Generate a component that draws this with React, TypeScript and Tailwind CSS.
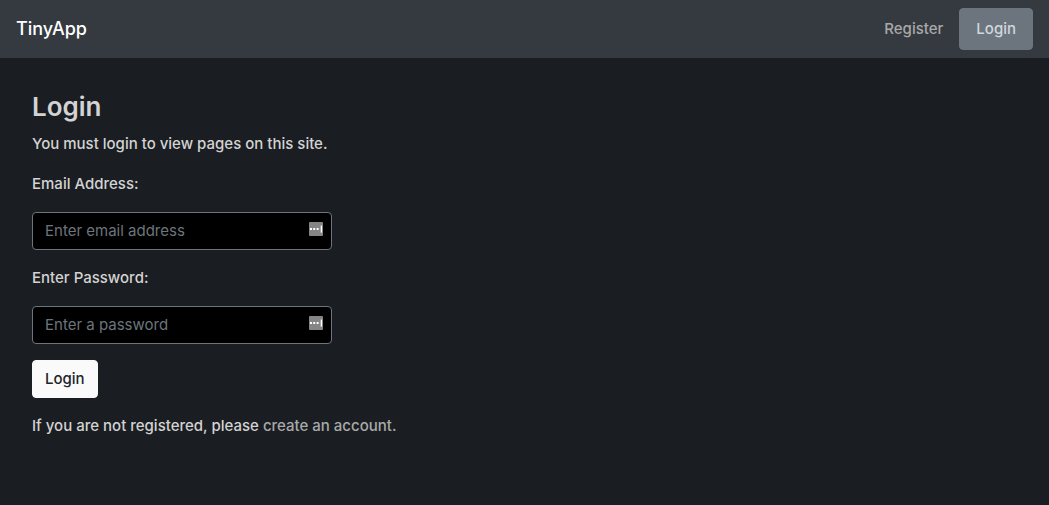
import React from "react";

function FieldIcon() {
  return (
    <svg className="pointer-events-none absolute right-2 top-2.5 h-4 w-4" viewBox="0 0 16 16" aria-hidden="true">
      <rect x="1" y="0" width="14" height="14" rx="1" fill="#858585" />
      <rect x="2" y="6" width="2" height="2" fill="#fff" />
      <rect x="5.2" y="6" width="2" height="2" fill="#fff" />
      <rect x="8.6" y="6" width="2" height="2" fill="#fff" />
      <rect x="12.7" y="3.6" width="1.3" height="7" fill="#fff" />
    </svg>
  );
}

type FieldProps = { id: string; label: string; type: string; placeholder: string };

function Field({ id, label, type, placeholder }: FieldProps) {
  return (
    <div className="flex flex-col gap-4">
      <label htmlFor={id}>{label}</label>
      <div className="relative">
        <input
          id={id}
          type={type}
          placeholder={placeholder}
          className="block w-full rounded border border-[#6c757d] bg-black px-3 py-1.5 font-normal leading-6 text-white placeholder:text-[#6c757d] placeholder:opacity-100"
        />
        <FieldIcon />
      </div>
    </div>
  );
}

export default function App() {
  return (
    <div className="flex min-h-screen flex-col bg-[#1a1d21] font-['Inter',sans-serif] text-[15px] leading-6 text-[#d3d3d3]">
      <nav className="flex items-center justify-between bg-[#343a40] px-4 py-2">
        <a href="#" className="text-[18px] font-medium leading-8 text-white">TinyApp</a>
        <div className="flex items-center gap-4">
          <a href="#register" className="font-medium text-[#a9a9a9]">Register</a>
          <a href="#login" className="rounded border border-[#6c757d] bg-[#6c757d] px-4 py-2 font-medium text-[#d0d7de]">Login</a>
        </div>
      </nav>
      <main className="px-8 pt-8 font-medium">
        <h1 className="mb-2 text-[26px] font-semibold leading-[34px]">Login</h1>
        <p className="mb-4">You must login to view pages on this site.</p>
        <form className="flex w-full max-w-[300px] flex-col items-stretch gap-4" onSubmit={(e) => e.preventDefault()}>
          <Field id="email" label="Email Address:" type="email" placeholder="Enter email address" />
          <Field id="password" label="Enter Password:" type="password" placeholder="Enter a password" />
          <button type="submit" className="self-start rounded border border-[#fafafa] bg-[#fafafa] px-3 py-1.5 text-[#212529]">
            Login
          </button>
        </form>
        <p className="mt-4">
          If you are not registered, please <a href="#register" className="text-[#a9a9a9]">create an account.</a>
        </p>
      </main>
    </div>
  );
}
